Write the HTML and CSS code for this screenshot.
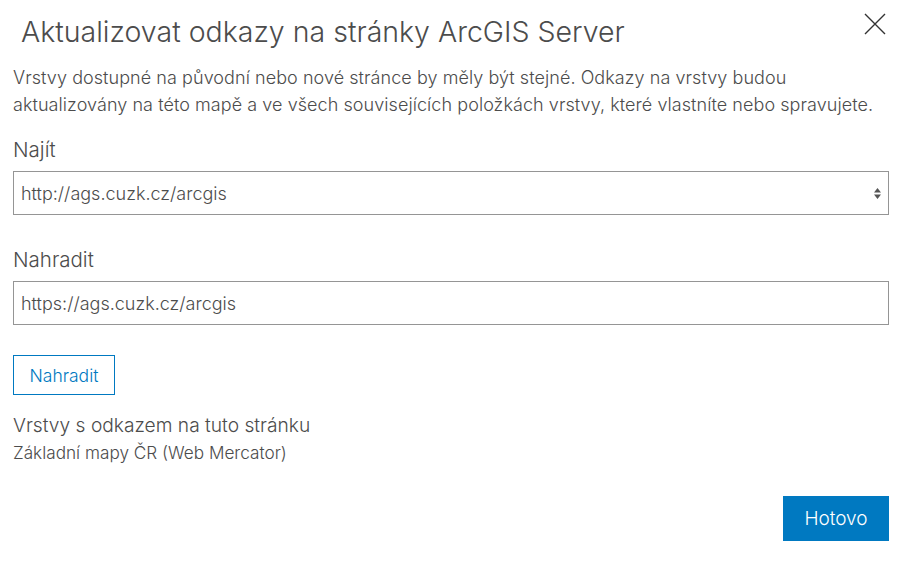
FILE: index.html
```html
<!DOCTYPE html>
<html lang="cs">
<head>
<meta charset="utf-8">
<title>Aktualizovat odkazy</title>
<link rel="stylesheet" href="styles.css">
</head>
<body>
<div class="dialog">
  <div class="header">
    <h1 class="title">Aktualizovat odkazy na stránky ArcGIS Server</h1>
    <button class="close" aria-label="Zavřít">
      <svg width="22" height="22" viewBox="0 0 22 22"><path d="M1 1 L21 21 M21 1 L1 21" stroke="#333" stroke-width="1.4" fill="none"/></svg>
    </button>
  </div>
  <p class="desc">Vrstvy dostupné na původní nebo nové stránce by měly být stejné. Odkazy na vrstvy budou aktualizovány na této mapě a ve všech souvisejících položkách vrstvy, které vlastníte nebo spravujete.</p>
  <label class="label">Najít</label>
  <div class="field select">
    <span class="value">http://ags.cuzk.cz/arcgis</span>
    <svg class="arrows" width="7" height="11" viewBox="0 0 7 11"><path d="M3.5 0 L7 4.5 L0 4.5 Z M0 6.5 L7 6.5 L3.5 11 Z" fill="#555"/></svg>
  </div>
  <label class="label label2">Nahradit</label>
  <div class="field">
    <span class="value">https://ags.cuzk.cz/arcgis</span>
  </div>
  <button class="btn-outline">Nahradit</button>
  <div class="sub">Vrstvy s odkazem na tuto stránku</div>
  <div class="item">Základní mapy ČR (Web Mercator)</div>
  <div class="footer">
    <button class="btn-primary">Hotovo</button>
  </div>
</div>
</body>
</html>
```
FILE: styles.css
```css
html, body {
  margin: 0;
  padding: 0;
  background: #fff;
}
body {
  font-family: "Inter", "Open Sans", sans-serif;
  font-weight: 300;
  color: #4c4c4c;
}
.dialog {
  padding: 0 13px;
  width: 876px;
}
.header {
  display: flex;
  justify-content: space-between;
  align-items: flex-start;
  height: 64px;
}
.title {
  margin: 0;
  padding: 12px 0 0 8px;
  font-size: 28.5px;
  font-weight: 300;
  line-height: 40px;
  color: #4c4c4c;
}
.close {
  border: 0;
  background: none;
  padding: 0;
  margin: 13px 3px 0 0;
  width: 22px;
  height: 22px;
  display: flex;
  cursor: pointer;
}
.desc {
  margin: 0;
  font-size: 18px;
  line-height: 27px;
  letter-spacing: 0.06px;
}
.label {
  display: block;
  margin-top: 19px;
  font-size: 20.5px;
  line-height: 26px;
}
.label2 {
  margin-top: 32px;
}
.field {
  box-sizing: border-box;
  margin-top: 8px;
  height: 44px;
  border: 1px solid #959595;
  display: flex;
  align-items: center;
  justify-content: space-between;
  padding: 0 7px 0 7px;
  font-size: 18px;
  color: #4c4c4c;
}
.btn-outline {
  box-sizing: border-box;
  margin-top: 30px;
  height: 40px;
  width: 102px;
  padding: 0;
  border: 1px solid #0079c1;
  background: #fff;
  color: #0079c1;
  font-family: inherit;
  font-size: 17.5px;
  font-weight: 300;
  display: block;
}
.sub {
  margin-top: 17px;
  font-size: 19.2px;
  line-height: 26px;
}
.item {
  margin-top: 3px;
  font-size: 17.2px;
  line-height: 24px;
}
.footer {
  display: flex;
  justify-content: flex-end;
  margin-top: 31px;
}
.btn-primary {
  height: 45px;
  width: 106px;
  border: 0;
  background: #0079c1;
  color: #fff;
  font-family: inherit;
  font-size: 19px;
  font-weight: 300;
}
```
